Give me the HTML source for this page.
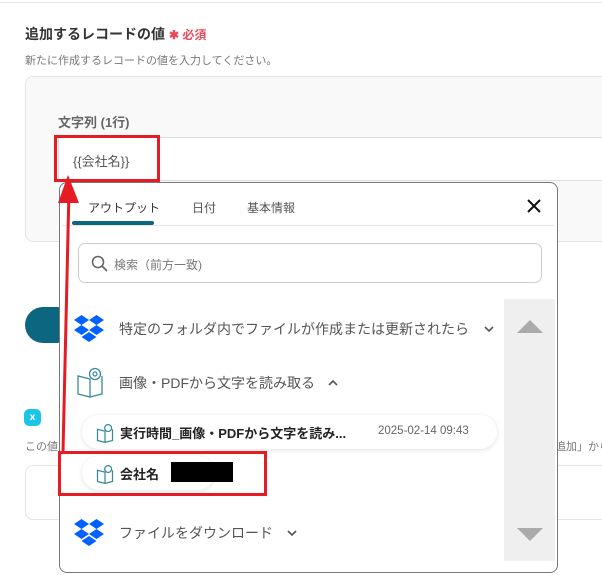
<!DOCTYPE html>
<html><head><meta charset="utf-8"><style>
*{margin:0;padding:0;box-sizing:border-box}
body{width:602px;height:575px;overflow:hidden;background:#fff;font-family:"Liberation Sans","Noto Sans CJK JP",sans-serif;position:relative;color:#333}
.a{position:absolute}
.t{white-space:nowrap}
</style></head><body>
<div class="a" style="left:0;top:2px;width:602px;height:1px;background:#e6e6e6"></div>
<div class="a t" style="left:25px;top:24px;font-size:14px;font-weight:bold;color:#333">追加するレコードの値<span style="color:#e8495f;font-size:12px;margin-left:4px">✱ 必須</span></div>
<div class="a t" style="left:25px;top:52px;font-size:11px;color:#777">新たに作成するレコードの値を入力してください。</div>
<div class="a" style="left:25px;top:76px;width:600px;height:166px;background:#f9f9f9;border:1px solid #e4e4e4;border-radius:8px"></div>
<div class="a t" style="left:58px;top:112px;font-size:13px;font-weight:bold;color:#666">文字列 (1行)</div>
<div class="a" style="left:58px;top:137px;width:560px;height:44px;background:#fff;border:1px solid #ddd"></div>
<div class="a t" style="left:73px;top:151px;font-size:13px;color:#555">{{会社名}}</div>
<div class="a" style="left:25px;top:307px;width:50px;height:36px;background:#0d6680;border-radius:18px"></div>
<div class="a" style="left:24px;top:409px;width:17px;height:17px;background:#1cc5e6;border-radius:5px;color:#fff;font-size:10px;font-weight:bold;text-align:center;line-height:17px">x</div>
<div class="a t" style="left:25px;top:438px;font-size:11px;color:#777">この値</div>
<div class="a t" style="left:555px;top:438px;font-size:11px;color:#777">追加」から</div>
<div class="a" style="left:25px;top:465px;width:600px;height:55px;border:1px solid #e4e4e4;border-radius:8px;background:#fff"></div>
<div class="a" style="left:59px;top:182px;width:499px;height:391px;background:#fff;border:1px solid #777;border-radius:8px;overflow:hidden">
 <div class="a t" style="left:28px;top:16px;font-size:12px;color:#333">アウトプット</div>
 <div class="a t" style="left:132px;top:16px;font-size:12px;color:#555">日付</div>
 <div class="a t" style="left:187px;top:16px;font-size:12px;color:#555">基本情報</div>
 <div class="a" style="left:12px;top:38px;width:82px;height:4px;background:#0d6680;border-radius:2px"></div>
 <div class="a" style="left:2px;top:42px;width:492px;height:1px;background:#e6e6e6"></div>
 <svg class="a" style="left:466px;top:15px" width="16" height="16"><path d="M2 2L14 14M14 2L2 14" stroke="#111" stroke-width="2"/></svg>
 <div class="a" style="left:18px;top:60px;width:464px;height:40px;border:1px solid #ccc;border-radius:7px"></div>
 <svg class="a" style="left:31px;top:72px" width="18" height="18"><circle cx="7" cy="7" r="5.5" fill="none" stroke="#666" stroke-width="1.6"/><path d="M11 11L16 16" stroke="#666" stroke-width="1.8"/></svg>
 <div class="a t" style="left:54px;top:73px;font-size:12px;color:#777">検索（前方一致)</div>
 <div class="a" style="left:444px;top:116px;width:51px;height:262px;background:#efefef"></div>
 <svg class="a" style="left:457px;top:135px" width="26" height="16"><path d="M0 15L13 2L26 15Z" fill="#aaa"/></svg>
 <svg class="a" style="left:457px;top:344px" width="26" height="16"><path d="M0 1L13 14L26 1Z" fill="#aaa"/></svg>
 <svg class="a" style="left:14px;top:131px" width="30" height="30" viewBox="0 0 30 30"><path d="M7.5 1L0 6l7.5 5L15 6zM22.5 1L15 6l7.5 5L30 6zM0 16l7.5 5L15 16l-7.5-5zM22.5 11L15 16l7.5 5L30 16zM7.5 23L15 28l7.5-5L15 18z" fill="#0061fe"/></svg>
 <div class="a t" style="left:59px;top:136px;font-size:14px;color:#555">特定のフォルダ内でファイルが作成または更新されたら</div>
 <svg class="a" style="left:424px;top:143px" width="10" height="7"><path d="M1 1L5 5L9 1" fill="none" stroke="#555" stroke-width="1.6"/></svg>
 <svg class="a" style="left:16px;top:183px" width="28" height="32" viewBox="0 0 28 32"><path d="M2 10v18l12 3V13z M26 10v18l-12 3" fill="none" stroke="#3a8a9a" stroke-width="1.3"/><circle cx="19" cy="8" r="5.5" fill="#fff" stroke="#3a8a9a" stroke-width="1.3"/><circle cx="19" cy="8" r="2" fill="none" stroke="#3a8a9a" stroke-width="1.2"/></svg>
 <div class="a t" style="left:59px;top:190px;font-size:14px;color:#555">画像・PDFから文字を読み取る</div>
 <svg class="a" style="left:268px;top:196px" width="10" height="7"><path d="M1 6L5 2L9 6" fill="none" stroke="#555" stroke-width="1.6"/></svg>
 <div class="a" style="left:22px;top:232px;width:415px;height:34px;background:#fff;border-radius:17px;box-shadow:0 1px 5px rgba(0,0,0,.12)"></div>
 <div class="a t" style="left:60px;top:240px;font-size:13px;font-weight:bold;color:#222">実行時間_画像・PDFから文字を読み...</div>
 <div class="a t" style="left:318px;top:242px;font-size:11.5px;color:#666">2025-02-14 09:43</div>
 <div class="a" style="left:22px;top:273px;width:133px;height:34px;background:#fff;border-radius:17px;box-shadow:0 1px 5px rgba(0,0,0,.12)"></div>
 <div class="a t" style="left:60px;top:281px;font-size:13px;font-weight:bold;color:#222">会社名</div>
 <div class="a" style="left:111px;top:279px;width:62px;height:20px;background:#000"></div>
 <svg class="a" style="left:36px;top:240px" width="18" height="20" viewBox="0 0 28 32"><path d="M2 10v18l12 3V13z M26 10v18l-12 3" fill="none" stroke="#3a8a9a" stroke-width="2"/><circle cx="19" cy="8" r="5.5" fill="#fff" stroke="#3a8a9a" stroke-width="2"/></svg>
 <svg class="a" style="left:36px;top:281px" width="18" height="20" viewBox="0 0 28 32"><path d="M2 10v18l12 3V13z M26 10v18l-12 3" fill="none" stroke="#3a8a9a" stroke-width="2"/><circle cx="19" cy="8" r="5.5" fill="#fff" stroke="#3a8a9a" stroke-width="2"/></svg>
 <svg class="a" style="left:14px;top:335px" width="30" height="30" viewBox="0 0 30 30"><path d="M7.5 1L0 6l7.5 5L15 6zM22.5 1L15 6l7.5 5L30 6zM0 16l7.5 5L15 16l-7.5-5zM22.5 11L15 16l7.5 5L30 16zM7.5 23L15 28l7.5-5L15 18z" fill="#0061fe"/></svg>
 <div class="a t" style="left:59px;top:340px;font-size:14px;color:#555">ファイルをダウンロード</div>
 <svg class="a" style="left:227px;top:347px" width="10" height="7"><path d="M1 1L5 5L9 1" fill="none" stroke="#555" stroke-width="1.6"/></svg>
</div>
<div class="a" style="left:54px;top:135px;width:106px;height:47px;border:3px solid #e51c23"></div>
<div class="a" style="left:58px;top:451px;width:209px;height:45px;border:3px solid #e51c23"></div>
<svg class="a" style="left:0;top:0" width="602" height="575"><path d="M63 452L69 190" stroke="#e51c23" stroke-width="3"/><path d="M58 203L68 175L79 203Z" fill="#e51c23"/></svg>
</body></html>
